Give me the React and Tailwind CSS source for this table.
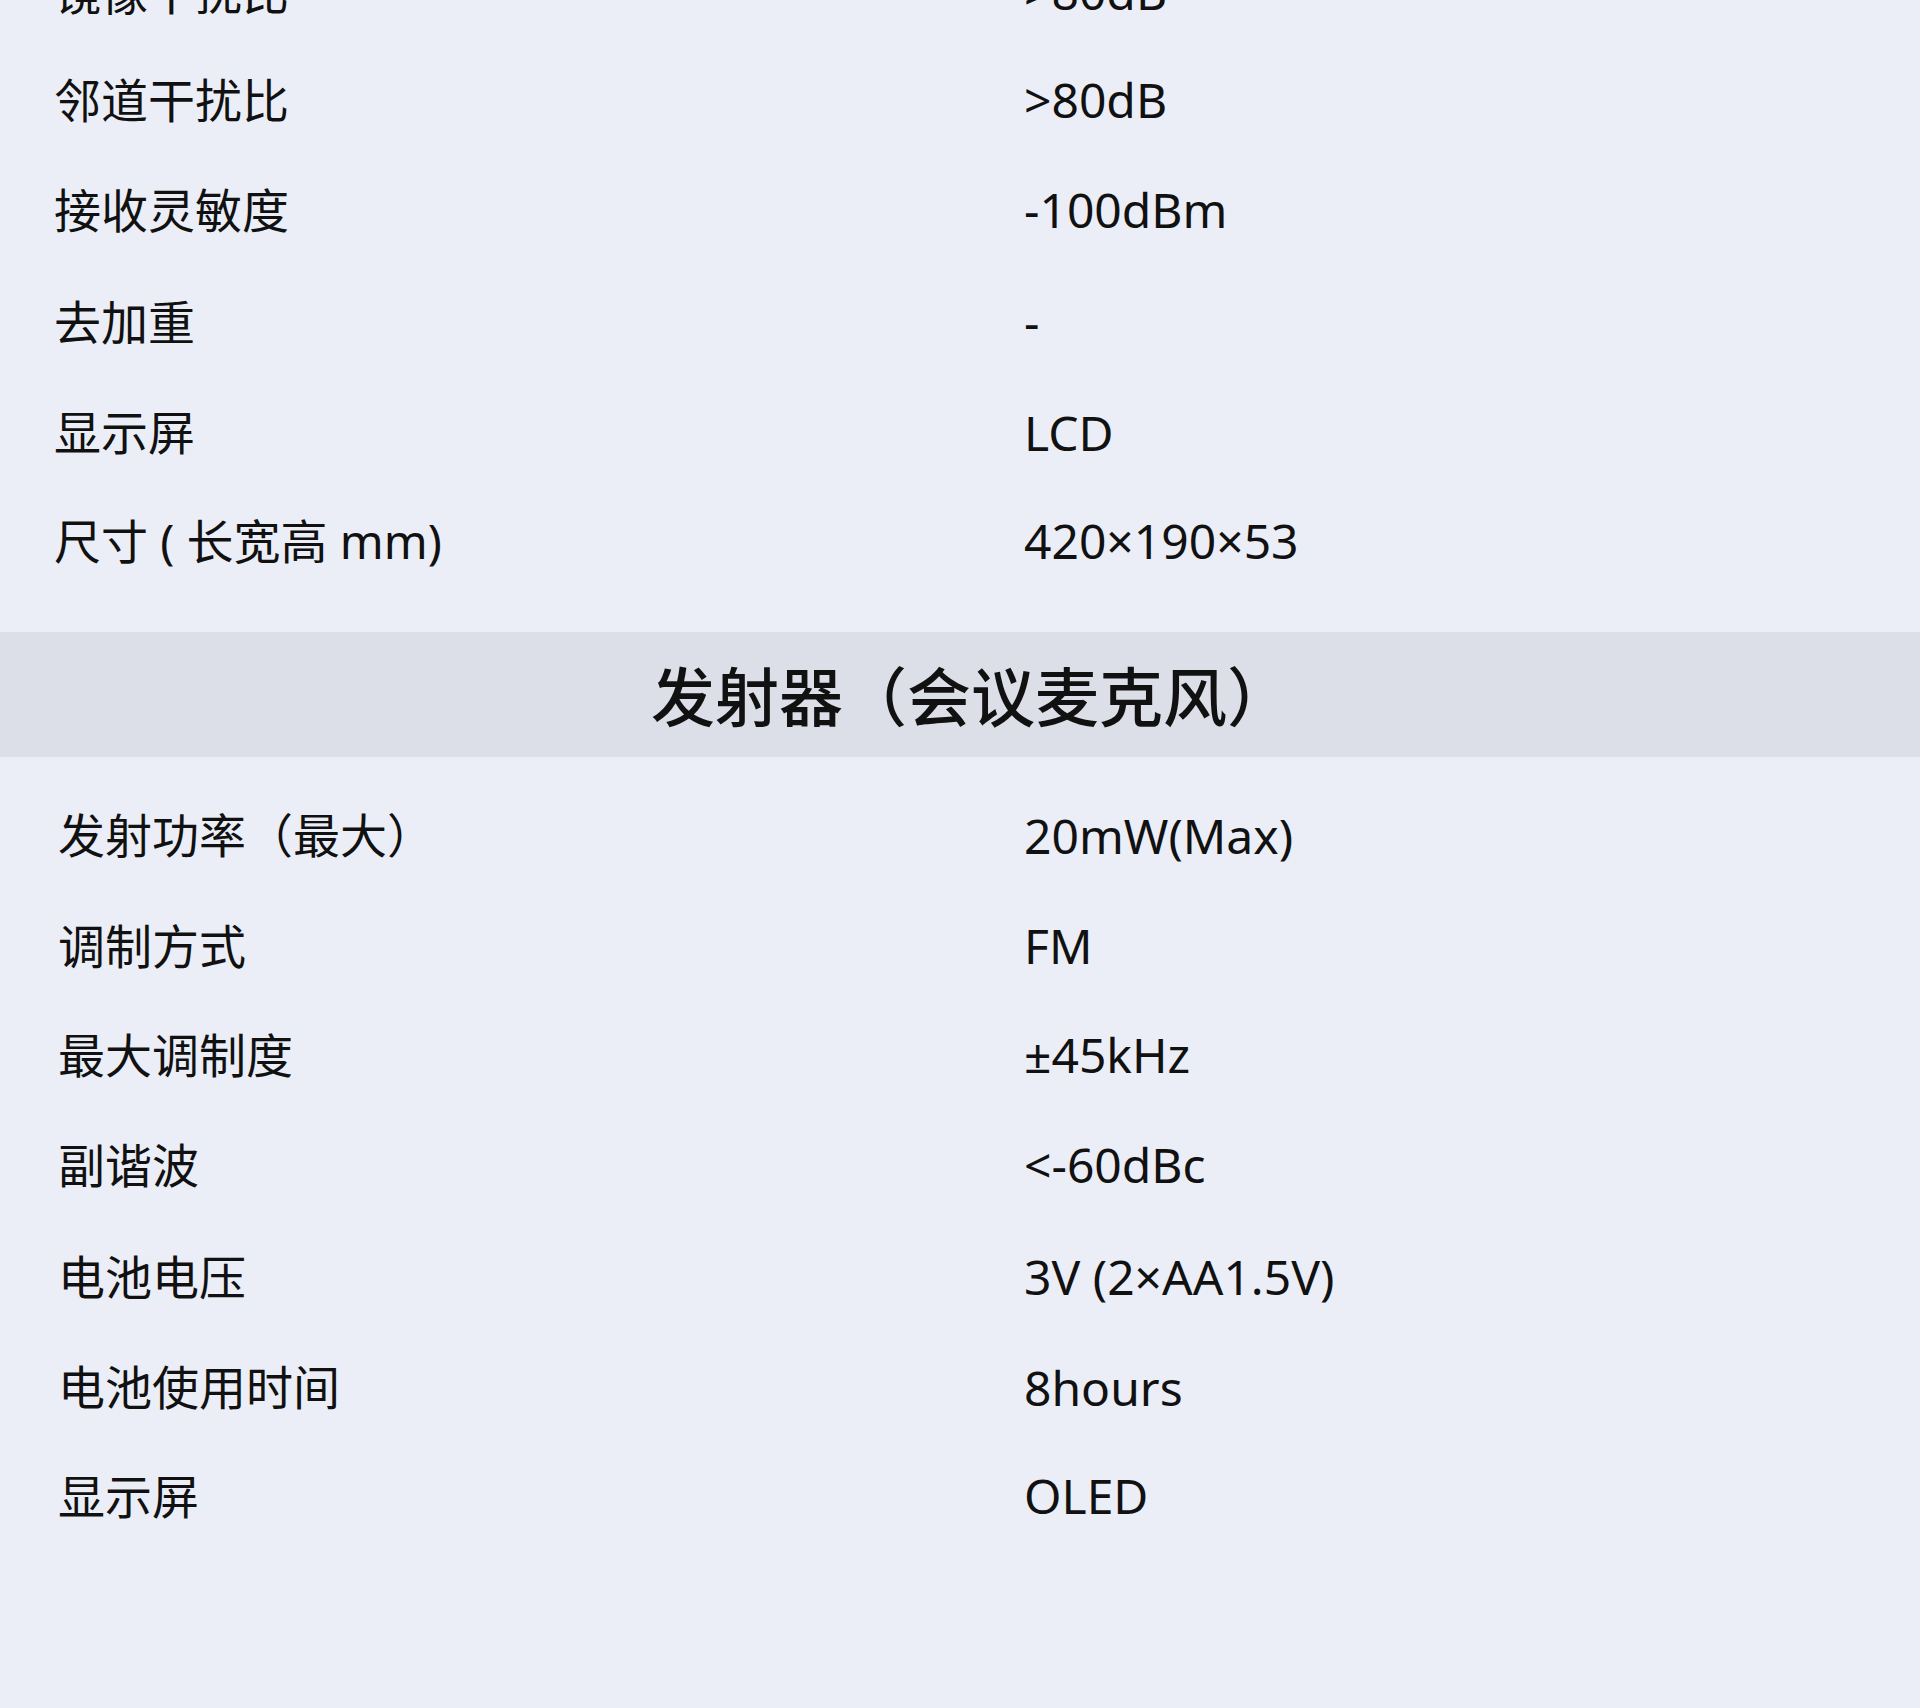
import React from "react";

const FONT = { fontFamily: '"Noto Sans", "Noto Sans CJK SC", sans-serif' };

const sec1 = [
  { l: "镜像干扰比", v: ">80dB", h: "h-[108px] -mt-[62px]" },
  { l: "邻道干扰比", v: ">80dB", h: "h-[108px]" },
  { l: "接收灵敏度", v: "-100dBm", h: "h-[112px]" },
  { l: "去加重", v: "-", h: "h-[112px]" },
  { l: "显示屏", v: "LCD", h: "h-[109px]" },
  { l: "尺寸 ( 长宽高 mm)", v: "420×190×53", h: "h-[108px]" },
];

const sec2 = [
  { l: "发射功率（最大）", v: "20mW(Max)", h: "h-[111px]" },
  { l: "调制方式", v: "FM", h: "h-[110px]" },
  { l: "最大调制度", v: "±45kHz", h: "h-[108px]" },
  { l: "副谐波", v: "<-60dBc", h: "h-[112px]" },
  { l: "电池电压", v: "3V (2×AA1.5V)", h: "h-[112px]" },
  { l: "电池使用时间", v: "8hours", h: "h-[109px]" },
  { l: "显示屏", v: "OLED", h: "h-[108px]" },
];

function Row({ r, labelW, pl }) {
  return (
    <div className={`flex items-center ${r.h} ${pl}`}>
      <div className={`${labelW} shrink-0 text-[47px] leading-none text-[#111111] whitespace-pre`}>
        {r.l}
      </div>
      <div className="text-[48px] leading-none text-[#111111] whitespace-nowrap">{r.v}</div>
    </div>
  );
}

export default function App() {
  return (
    <div className="w-[1920px] h-[1708px] overflow-hidden bg-[#ebeef7]" style={FONT}>
      <div className="flex flex-col pb-[37px]">
        {sec1.map((r, i) => (
          <Row key={i} r={r} labelW="w-[970px]" pl="pl-[54px]" />
        ))}
      </div>
      <div className="h-[125px] bg-[#dcdfe8] flex items-center justify-center">
        <div className="text-[64px] leading-none font-medium text-[#111111] pt-[4px] pl-[22px]">
          发射器（会议麦克风）
        </div>
      </div>
      <div className="flex flex-col pt-[23px]">
        {sec2.map((r, i) => (
          <Row key={i} r={r} labelW="w-[966px]" pl="pl-[58px]" />
        ))}
      </div>
    </div>
  );
}
